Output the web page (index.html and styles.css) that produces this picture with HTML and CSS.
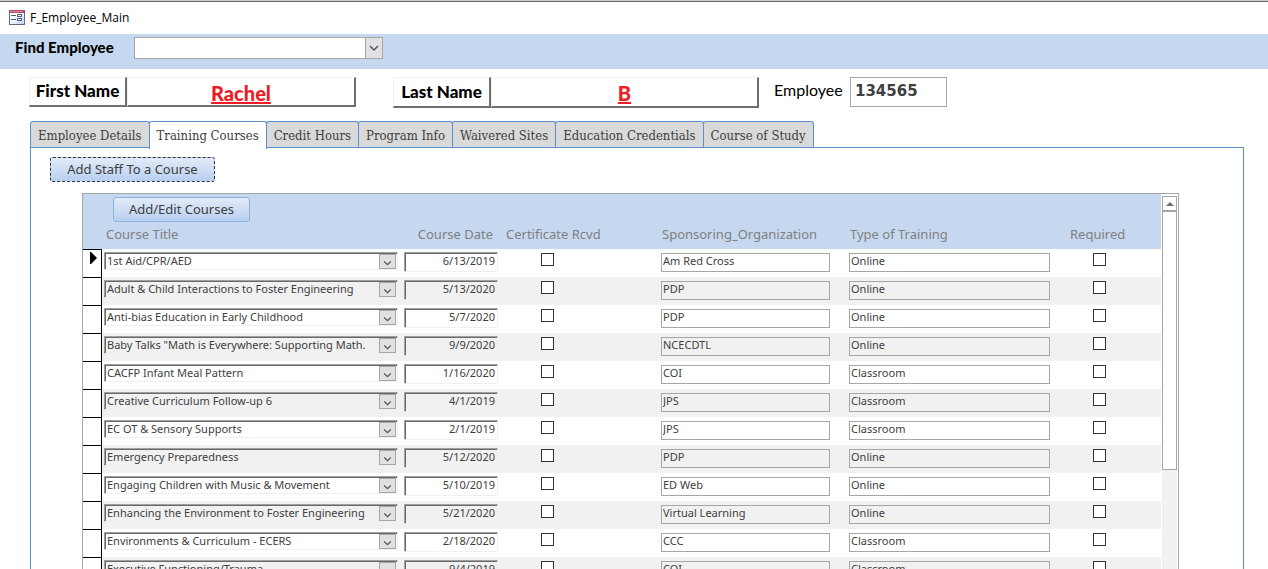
FILE: index.html
```
<!DOCTYPE html>
<html lang="en">
<head>
  <meta charset="UTF-8" />
  <meta name="viewport" content="width=device-width, initial-scale=1.0" />
  <title>F_Employee_Main</title>
  <link rel="stylesheet" href="styles.css">
</head>
<body>
  <div class="titlebar">
    <svg class="form-icon" width="16" height="15" viewBox="0 0 16 15">
      <defs>
        <linearGradient id="iconBg" x1="0" y1="0" x2="1" y2="1">
          <stop offset="0.4" stop-color="#fff" />
          <stop offset="1" stop-color="#b9cbee" />
        </linearGradient>
      </defs>
      <rect x="0.5" y="0.5" width="15" height="14" fill="url(#iconBg)" stroke="#5f6a8c" />
      <rect x="0" y="0" width="16" height="3" fill="#b5476b" />
      <rect x="1" y="1" width="13" height="1" fill="#d4849c" />
      <path d="M2 5.500h5M2 9.500h5" stroke="#44598c" />
      <path d="M8.500 4.500h4v2h-4zM8.500 8.500h4v2h-4z" fill="#fff" stroke="#44598c" />
    </svg>
    <span>F_Employee_Main</span>
  </div>

  <div class="find-bar">
    <label for="findEmployee">Find Employee</label>
    <div class="combo find-combo">
      <select id="findEmployee"><option></option></select>
      <svg class="arrow" viewBox="0 0 16 16"><path d="M4 6l4 4 4-4" /></svg>
    </div>
  </div>

  <div class="name-row">
    <div class="name-field first">
      <label for="firstName">First Name</label>
      <input id="firstName" type="text" value="Rachel" />
    </div>
    <div class="name-field last">
      <label for="lastName">Last Name</label>
      <input id="lastName" type="text" value="B" />
    </div>
    <div class="employee-field">
      <label for="employeeId">Employee</label>
      <input id="employeeId" type="text" value="134565" />
    </div>
  </div>

  <div class="tabs">
    <button class="tab">Employee Details</button>
    <button class="tab active">Training Courses</button>
    <button class="tab">Credit Hours</button>
    <button class="tab">Program Info</button>
    <button class="tab">Waivered Sites</button>
    <button class="tab">Education Credentials</button>
    <button class="tab">Course of Study</button>
  </div>

  <div class="panel">
    <button class="btn focused">Add Staff To a Course</button>

    <div class="subform">
      <div class="sheet">
        <div class="sheet-header">
          <button class="btn">Add/Edit Courses</button>
        </div>
        <table class="courses">
          <colgroup>
            <col class="col-selector" />
            <col class="col-title" />
            <col class="col-date" />
            <col class="col-cert" />
            <col class="col-org" />
            <col class="col-type" />
            <col />
          </colgroup>
          <thead>
            <tr>
              <th></th>
              <th class="title">Course Title</th>
              <th class="date">Course Date</th>
              <th class="cert">Certificate Rcvd</th>
              <th class="org">Sponsoring_Organization</th>
              <th class="type">Type of Training</th>
              <th class="required">Required</th>
            </tr>
          </thead>
          <tbody id="rows"></tbody>
        </table>
      </div>
      <div class="scrollbar">
        <button class="scroll-up" aria-label="Scroll up">
          <svg width="8" height="4" viewBox="0 0 8 4"><path d="M4 0l4 4H0z" fill="#6b6b6b" /></svg>
        </button>
        <div class="thumb"></div>
      </div>
    </div>
  </div>

  <script>
    const courses = [
      ['1st Aid/CPR/AED', '6/13/2019', 'Am Red Cross', 'Online'],
      ['Adult & Child Interactions to Foster Engineering', '5/13/2020', 'PDP', 'Online'],
      ['Anti-bias Education in Early Childhood', '5/7/2020', 'PDP', 'Online'],
      ['Baby Talks "Math is Everywhere: Supporting Math.', '9/9/2020', 'NCECDTL', 'Online'],
      ['CACFP Infant Meal Pattern', '1/16/2020', 'COI', 'Classroom'],
      ['Creative Curriculum Follow-up 6', '4/1/2019', 'JPS', 'Classroom'],
      ['EC OT & Sensory Supports', '2/1/2019', 'JPS', 'Classroom'],
      ['Emergency Preparedness', '5/12/2020', 'PDP', 'Online'],
      ['Engaging Children with Music & Movement', '5/10/2019', 'ED Web', 'Online'],
      ['Enhancing the Environment to Foster Engineering', '5/21/2020', 'Virtual Learning', 'Online'],
      ['Environments & Curriculum - ECERS', '2/18/2020', 'CCC', 'Classroom'],
      ['Executive Functioning/Trauma', '9/4/2019', 'COI', 'Classroom'],
    ];

    const marker = '<svg class="marker" width="7" height="12" viewBox="0 0 7 12"><path d="M0 0h1l6 6-6 6H0z" /></svg>';

    document.getElementById('rows').innerHTML = courses.map(([title, date, org, type], i) => `
      <tr>
        <td class="selector">${i === 0 ? marker : ''}</td>
        <td class="title">
          <div class="combo">
            <select aria-label="Course Title"><option>${title.replace('&', '&amp;')}</option></select>
            <svg class="arrow" viewBox="0 0 16 16"><path d="M4 8l4 4 4-4" /></svg>
          </div>
        </td>
        <td class="date"><input type="text" aria-label="Course Date" value="${date}" /></td>
        <td class="cert"><input type="checkbox" aria-label="Certificate Rcvd" /></td>
        <td class="org"><input type="text" aria-label="Sponsoring Organization" value="${org}" /></td>
        <td class="type"><input type="text" aria-label="Type of Training" value="${type}" /></td>
        <td class="required"><input type="checkbox" aria-label="Required" /></td>
      </tr>`).join('');
  </script>
</body>
</html>
```
FILE: styles.css
```
* {
  box-sizing: border-box;
}
body {
  display: flex;
  flex-direction: column;
  height: 100vh;
  margin: 0;
  overflow: hidden;
  background: #fff;
  border-top: 1px solid #d0d0d0;
  color: #404040;
  font-family: "Noto Sans", sans-serif;
  font-size: 11px;
}
input, select, button {
  margin: 0;
  border-radius: 0;
  color: inherit;
  font: inherit;
}

/* Window title */
.titlebar {
  display: flex;
  flex: none;
  align-items: center;
  gap: 5px;
  height: 33px;
  padding: 0 9px 2px;
  border-top: 1px solid #6a6a6a;
  color: #000;
  font-family: "Open Sans", sans-serif;
  font-size: 12px;
}

/* Find employee */
.find-bar {
  display: flex;
  flex: none;
  align-items: flex-start;
  height: 35px;
  padding: 3px 15px;
  background: #c6d8f0;
}
.find-bar label {
  width: 119px;
  color: #000;
  font-family: Lato, sans-serif;
  font-size: 15px;
  font-weight: 900;
  line-height: 20px;
}
.combo {
  position: relative;
}
.combo select {
  display: block;
  width: 100%;
  appearance: none;
  outline: none;
}
.combo .arrow {
  position: absolute;
  top: 2px;
  right: 2px;
  width: 17px;
  height: 15px;
  background: #e1e1e1;
  border: 1px solid #a6a6a6;
  pointer-events: none;
}
.arrow path {
  fill: none;
  stroke: #555;
  stroke-width: 1.5;
}
.find-combo {
  width: 249px;
}
.find-combo select {
  height: 22px;
  background: #fff;
  border: 1px solid #a6a6a6;
}
.find-combo .arrow {
  top: 0;
  right: 0;
  width: 18px;
  height: 22px;
}

/* Name boxes */
.name-row {
  display: flex;
  flex: none;
  align-items: flex-start;
  padding: 8px 29px 0;
  color: #000;
  font-family: "Comic Sans MS", Lato, sans-serif;
  font-size: 17px;
}
.name-field {
  display: flex;
}
.name-field label, .name-field input {
  height: 30px;
  border: 1px solid #f0f0f0;
  border-right: 2px solid #6e6e6e;
  border-bottom: 2px solid #6e6e6e;
}
.name-field label {
  width: 98px;
  line-height: 26px;
  font-weight: 900;
  text-align: center;
}
.name-field input {
  width: 229px;
  padding: 2px 0 0;
  background: #fff;
  color: #ed1c24;
  font-size: 20px;
  font-weight: 900;
  text-align: center;
  text-decoration: underline;
}
.last {
  margin-left: 37px;
}
.last label, .last input {
  height: 31px;
}
.last label {
  line-height: 28px;
}
.last input {
  width: 268px;
}
.employee-field {
  display: flex;
  margin-left: 15px;
}
.employee-field label {
  width: 76px;
  font-size: 16px;
  line-height: 26px;
}
.employee-field input {
  width: 97px;
  height: 30px;
  padding: 0 4px 2px;
  border: 1px solid #a6a6a6;
  color: #404040;
  font-family: "DejaVu Sans", sans-serif;
  font-size: 15px;
  font-weight: bold;
}

/* Tabs */
.tabs {
  display: flex;
  flex: none;
  margin: 13px 0 0 30px;
}
.tab {
  height: 27px;
  margin-right: -1px;
  padding: 0 7px;
  background: #d9d9d9;
  border: 1px solid #5b8fcf;
  border-bottom: none;
  border-radius: 3px 3px 0 0;
  font-family: "DejaVu Serif Condensed", "DejaVu Serif", serif;
  font-size: 13px;
  white-space: nowrap;
}
.tab.active {
  position: relative;
  height: 28px;
  margin-bottom: -1px;
  background: #fff;
}
.panel {
  display: flex;
  flex: 1;
  flex-direction: column;
  align-items: flex-start;
  min-height: 0;
  margin: -1px 24px 0 30px;
  padding: 9px 64px 0 51px;
  border: 1px solid #5b8fcf;
  border-bottom: none;
}

.btn {
  height: 25px;
  padding: 0 13px 2px 13px;
  background: linear-gradient(#e3ebf8, #b8cff0);
  border: 1px solid #8fb0dc;
  border-radius: 3px;
  font-size: 13px;
}
.sheet-header .btn {
  min-width: 137px;
}
.btn.focused {
  flex: none;
  min-width: 165px;
  margin-left: -32px;
  border: 1px dashed #333;
}

/* Course list */
.subform {
  display: flex;
  flex: 1;
  align-self: stretch;
  min-height: 0;
  margin-top: 11px;
  overflow: hidden;
  border: 1px solid #a6a6a6;
  border-bottom: none;
}
.sheet {
  flex: 1;
}
.sheet-header {
  height: 28px;
  padding: 3px 30px 0;
  background: #c6d8f0;
}
.courses {
  width: 100%;
  border-collapse: separate;
  border-spacing: 0;
  table-layout: fixed;
}
.col-selector {
  width: 19px;
}
.col-title {
  width: 302px;
}
.col-date {
  width: 101px;
}
.col-cert {
  width: 156px;
}
.col-org {
  width: 188px;
}
.col-type {
  width: 221px;
}
.courses th {
  height: 27px;
  padding: 0 0 4px 1px;
  background: #c6d8f0;
  color: #7f7f7f;
  font-size: 13px;
  font-weight: normal;
  line-height: 20px;
  text-align: left;
  white-space: nowrap;
}
.courses th.title {
  padding-left: 4px;
}
.courses th.date {
  padding-right: 12px;
  text-align: right;
}
.courses th.required {
  padding-left: 0;
}
.courses td {
  height: 28px;
  padding: 3px 0 0;
  vertical-align: top;
}
.courses tbody tr:nth-child(even) {
  background: #f1f1f1;
}
.courses .selector {
  padding: 2px 4px 0 0;
  background: #fff;
  border-top: 1px solid #000;
  border-right: 1px solid #000;
  text-align: right;
}
.marker {
  display: block;
  margin-left: auto;
}
td input, td select {
  display: block;
  background: transparent;
  line-height: 14px;
}
/* sunken edge, grey outside and dark inside */
td select, .date input {
  border: 1px solid #f0f0f0;
  border-top-color: #a0a0a0;
  border-left-color: #a0a0a0;
  box-shadow: inset 1px 1px #696969;
}
td .combo {
  width: 294px;
  margin-left: 2px;
}
td .combo select {
  height: 18px;
  padding: 0 18px 0 2px;
}
.date input {
  width: 94px;
  height: 20px;
  padding: 0 2px 3px 0;
  text-align: right;
}
.org input, .type input {
  height: 19px;
  margin-top: 1px;
  padding: 0 1px 4px;
  border: 1px solid #a6a6a6;
}
.org input {
  width: 169px;
}
.type input {
  width: 201px;
}
td input[type="checkbox"] {
  width: 13px;
  height: 13px;
  margin: 1px 0 0 36px;
  appearance: none;
  background: #fff;
  border: 1px solid #333;
}
.required input[type="checkbox"] {
  margin-left: 23px;
}

/* Scrollbar */
.scrollbar {
  display: flex;
  flex: none;
  flex-direction: column;
  width: 17px;
  padding: 2px 1px 0;
  background: linear-gradient(#f1f1f1, #f1f1f1) content-box;
}
.scroll-up {
  display: flex;
  flex: none;
  align-items: center;
  justify-content: center;
  height: 15px;
  padding: 0;
  background: #fff;
  border: 1px solid #a6a6a6;
}
.thumb {
  height: 259px;
  background: #fff;
  border: 1px solid #a6a6a6;
}
```
